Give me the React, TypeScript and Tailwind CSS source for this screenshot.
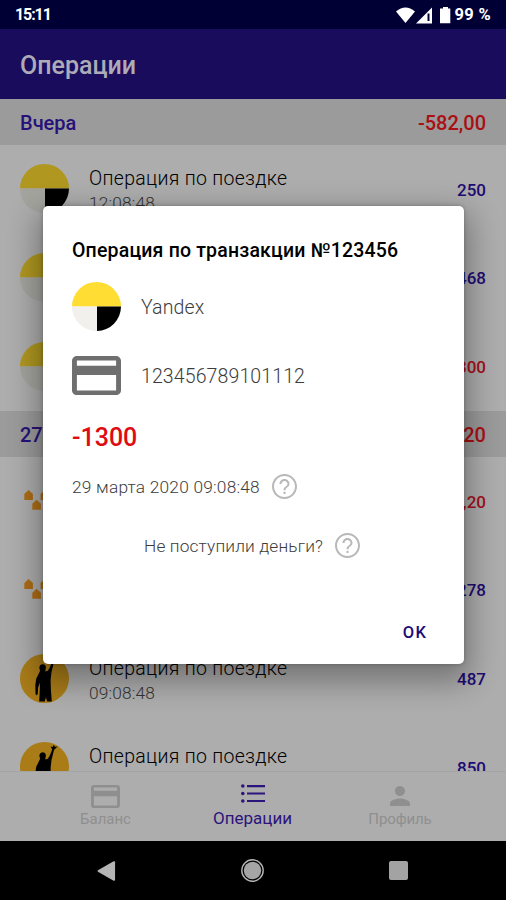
import React from "react";

type Kind = "taxi" | "houses" | "person";

function TaxiLogo({ dim = false }: { dim?: boolean }) {
  return (
    <svg className="size-[49px] shrink-0" viewBox="0 0 49 49">
      <path d="M0 24.5a24.5 24.5 0 0 1 49 0z" fill={dim ? "#b09820" : "#ffdd33"} />
      <path d="M0 24.5a24.5 24.5 0 0 0 25 24.5V24.5z" fill={dim ? "#a4a49f" : "#f1f0ed"} />
      <path d="M25 24.5h24a24.5 24.5 0 0 1-24 24.5z" fill="#000" />
    </svg>
  );
}

function HousesLogo() {
  const house = "M0 4L4.3 0l4.3 4V10H0z";
  return (
    <svg className="size-[49px] shrink-0" viewBox="0 0 49 49" fill="#ad6d16">
      <path d={house} transform="translate(4.3 14)" />
      <path d={house} transform="translate(12.3 23.8)" />
      <path d={house} transform="translate(20.6 14)" />
      <path d={house} transform="translate(28.6 23.8)" />
      <path d={house} transform="translate(36.8 14)" />
    </svg>
  );
}

function PersonLogo() {
  return (
    <svg className="size-[49px] shrink-0" viewBox="0 0 49 49">
      <circle cx="24.5" cy="24.5" r="24.500" fill="#a97c18" />
      <path
        fill="#000"
        d="M20.200 16.500C18.900 14.500 18.900 10.500 22.500 10.200c3 0 4 2.300 3 5.300l-.2 2 2.500-.8c1.700-2 2.700-5 4.400-9.200l-1.600-3 2 .6 1.200-2.300 1 2 2.700-.2-2 1.900-1.500 1.400-2.500 10.100-.9 8 .3 9.500.9 12H27.300l-1.500-4-1 4h-5.600l.7-14.500-.3-4.500-1.500 5.500-.3 5.500-.9 2-1.400-1.500-.2-9 1-6.500 1.800-3.500z"
      />
    </svg>
  );
}

function CardIcon({ className }: { className: string }) {
  return (
    <svg className={className} viewBox="2 4 20 16" preserveAspectRatio="none" fill="currentColor">
      <path d="M20 4H4c-1.110 0-1.990.89-1.990 2L2 18c0 1.110.89 2 2 2h16c1.110 0 2-.89 2-2V6c0-1.110-.89-2-2-2zm0 14.200H4v-6.400h16v6.400zm0-10.200H4V5.800h16v2.200z" />
    </svg>
  );
}

function HelpIcon() {
  return (
    <svg className="size-[25px] shrink-0 text-[#b8b8b8]" viewBox="2 2 20 20" fill="currentColor">
      <path d="M11.200 16.200h1.600v1.700h-1.600zM12 2C6.480 2 2 6.480 2 12s4.480 10 10 10 10-4.480 10-10S17.520 2 12 2zm0 18.400c-4.600 0-8.400-3.800-8.400-8.400S7.400 3.600 12 3.600s8.400 3.800 8.400 8.400-3.800 8.400-8.400 8.400zM12 6c-2.210 0-4 1.790-4 4h1.600c0-1.300 1.100-2.400 2.400-2.400s2.400 1.100 2.400 2.400c0 2-3.200 1.750-3.200 5h1.600c0-2.250 3.200-2.500 3.200-5 0-2.210-1.790-4-4-4z" />
    </svg>
  );
}

function SectionHeader({ title, total }: { title: string; total: string }) {
  return (
    <div className="flex h-[46px] shrink-0 items-center justify-between bg-[#9b9b9b] px-5 pt-[3px] text-[20px] font-medium">
      <span className="text-[#26117a]">{title}</span>
      <span className="text-[#a90f14]">{total}</span>
    </div>
  );
}

function Row({ kind, time, amount }: { kind: Kind; time: string; amount: string }) {
  return (
    <div className="flex h-[88.700px] shrink-0 items-center px-5">
      {kind === "taxi" ? <TaxiLogo dim /> : kind === "houses" ? <HousesLogo /> : <PersonLogo />}
      <div className="ml-5 flex grow flex-col pt-[3px]">
        <span className="text-[19.500px] leading-[26px] font-light tracking-[0.300px] text-black">Операция по поездке</span>
        <span className="text-[17.300px] leading-[22px] font-light tracking-[0.150px] text-[#333]">{time}</span>
      </div>
      <span className={amount.startsWith("-") ? "pt-[3px] text-[17px] font-medium text-[#a3101c]" : "pt-[3px] text-[17px] font-medium text-[#1e0b73]"}>
        {amount}
      </span>
    </div>
  );
}

function StatusBar() {
  return (
    <div className="flex h-[29px] shrink-0 items-center justify-between bg-[#000035] px-[15px] pt-px text-[16px] font-bold text-white">
      <span className="tracking-[-1.100px]">15:11</span>
      <div className="flex items-center">
        <svg className="h-[17px] w-[56px]" viewBox="0 0 56 17" fill="#fff">
          <path d="M0 4.500Q9.500-3.500 19 4.500L9.500 16z" />
          <path d="M36 .5v16H20zM31.500 6.500v7.500h2v-7.500z" fillRule="evenodd" />
          <path d="M47 0h5v1.500h2.300V16.200H44V1.500H47z" />
        </svg>
        <span className="ml-[3px] text-[16.500px] tracking-[0.300px]">99 %</span>
      </div>
    </div>
  );
}

function BottomNav() {
  return (
    <div className="flex h-[70px] shrink-0 items-end justify-center border-t border-[#a4a4a4] bg-[#adadad] pr-px pb-3">
      <div className="flex w-[147px] flex-col items-center text-[#8f8f8f]">
        <CardIcon className="h-[23px] w-[29px]" />
        <span className="mt-px text-[15px] leading-[20px]">Баланс</span>
      </div>
      <div className="flex w-[147px] flex-col items-center text-[#2b147c]">
        <svg className="h-[19px] w-[24px]" viewBox="0 0 24 19" fill="currentColor">
          <circle cx="1.800" cy="2" r="1.800" />
          <circle cx="1.800" cy="9.500" r="1.800" />
          <circle cx="1.800" cy="17" r="1.800" />
          <path d="M6 1h18v2.200H6zM6 8.400h18v2.200H6zM6 15.900h18v2.200H6z" />
        </svg>
        <span className="mt-1 text-[17px] leading-[22px]">Операции</span>
      </div>
      <div className="flex w-[147px] flex-col items-center text-[#8f8f8f]">
        <svg className="size-[20px]" viewBox="4 4 16 16" fill="currentColor">
          <path d="M12 12c2.210 0 4-1.790 4-4s-1.790-4-4-4-4 1.790-4 4 1.790 4 4 4zm0 2c-2.670 0-8 1.340-8 4v2h16v-2c0-2.660-5.330-4-8-4z" />
        </svg>
        <span className="mt-[3px] ml-px text-[15px] leading-[20px] tracking-[-0.100px]">Профиль</span>
      </div>
    </div>
  );
}

function SystemNav() {
  return (
    <div className="flex h-[59px] shrink-0 items-center justify-center gap-[125px] bg-black pr-[2px]">
      <svg className="h-[22px] w-[19px]" viewBox="0 0 20 22" fill="#b5b5b5">
        <path d="M1 10.200L17.500.8Q19 .2 19 1.800v18.400Q19 21.800 17.500 21.200L1 11.800Q0 11 1 10.200z" />
      </svg>
      <svg className="size-[23px]" viewBox="0 0 23 23">
        <circle cx="11.500" cy="11.500" r="10.700" fill="none" stroke="#b5b5b5" strokeWidth="1.400" />
        <circle cx="11.500" cy="11.500" r="8.700" fill="#a5a5a5" />
      </svg>
      <div className="size-[19px] rounded-[2px] bg-[#a3a3a3]" />
    </div>
  );
}

function Dialog() {
  return (
    <div className="absolute top-[206px] left-[42.500px] flex h-[458px] w-[421px] flex-col rounded-[5px] bg-white pr-[30px] pl-[29.500px] pt-[31px] text-[#3c3c3c] shadow-[0_12px_30px_6px_rgba(0,0,0,0.32),0_0_4px_rgba(0,0,0,0.25)]">
      <h2 className="text-[19.500px] leading-[28px] font-medium tracking-[0.180px] text-black">Операция по транзакции №123456</h2>
      <div className="mt-[17px] flex h-[49px] items-center gap-5 text-[19.500px] font-light tracking-[0.120px]">
        <TaxiLogo />
        <span className="pt-[3px]">Yandex</span>
      </div>
      <div className="mt-[25px] flex h-[39px] items-center gap-5 text-[19.500px] font-light tracking-[0.120px]">
        <CardIcon className="h-[39px] w-[49px] text-[#6f6f6f]" />
        <span className="pt-[3px]">123456789101112</span>
      </div>
      <div className="mt-[28px] text-[25px] leading-[30px] font-medium text-[#de0c12]">-1300</div>
      <div className="mt-[21px] flex h-[25px] items-center gap-[12px] text-[17.300px] font-light tracking-[0.220px]">
        <span className="pt-[2px]">29 марта 2020 09:08:48</span>
        <HelpIcon />
      </div>
      <div className="mt-[34px] ml-[72px] flex h-[25px] items-center gap-[12px] text-[17.300px] font-light tracking-[0.150px]">
        <span className="pt-[3px]">Не поступили деньги?</span>
        <HelpIcon />
      </div>
      <button className="mt-[63px] mr-[6px] self-end text-[16.500px] leading-[24px] font-medium tracking-[1.500px] text-[#1b0a78]">OK</button>
    </div>
  );
}

export default function App() {
  return (
    <div className="relative flex h-[900px] w-[506px] flex-col overflow-hidden bg-[#adadad] font-['Roboto',sans-serif]">
      <StatusBar />
      <header className="flex h-[69.500px] shrink-0 items-center bg-[#1a0c5d] px-5 pt-[3px] text-[25px] font-medium text-[#adabb6]">Операции</header>
      <main className="flex h-[672.500px] shrink-0 flex-col overflow-hidden">
        <SectionHeader title="Вчера" total="-582,00" />
        <Row kind="taxi" time="12:08:48" amount="250" />
        <Row kind="taxi" time="11:08:48" amount="468" />
        <Row kind="taxi" time="10:08:48" amount="-1300" />
        <SectionHeader title="27 марта" total="-1022,20" />
        <Row kind="houses" time="12:08:48" amount="-1300,20" />
        <Row kind="houses" time="10:08:48" amount="278" />
        <Row kind="person" time="09:08:48" amount="487" />
        <Row kind="person" time="08:08:48" amount="850" />
      </main>
      <BottomNav />
      <SystemNav />
      <Dialog />
    </div>
  );
}
